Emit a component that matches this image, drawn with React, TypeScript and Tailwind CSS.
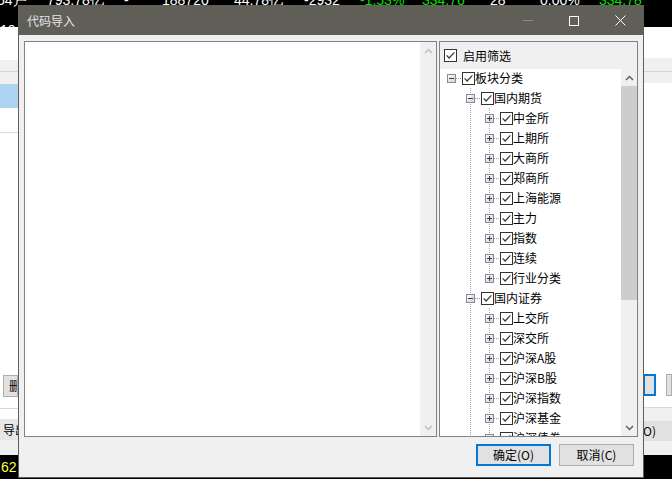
import React from 'react';

type TNode = { label: string; children?: TNode[]; expanded?: boolean };

const leaf = (label: string): TNode => ({ label, children: [{ label: '' }], expanded: false });

const TREE: TNode[] = [
  {
    label: '板块分类',
    expanded: true,
    children: [
      {
        label: '国内期货',
        expanded: true,
        children: ['中金所', '上期所', '大商所', '郑商所', '上海能源', '主力', '指数', '连续', '行业分类'].map(leaf),
      },
      {
        label: '国内证券',
        expanded: true,
        children: ['上交所', '深交所', '沪深A股', '沪深B股', '沪深指数', '沪深基金', '沪深债券', '沪深权证', '板块指数'].map(leaf),
      },
      { label: '港股', expanded: false, children: [{ label: '' }] },
    ],
  },
];

type Row = {
  label: string;
  level: number;
  guides: boolean[];
  hasTop: boolean;
  hasBottom: boolean;
  hasChildren: boolean;
  expanded: boolean;
};

function flatten(nodes: TNode[], level: number, guides: boolean[], out: Row[]): Row[] {
  nodes.forEach((n, i) => {
    const hasNext = i < nodes.length - 1;
    const hasPrev = i > 0;
    out.push({
      label: n.label,
      level,
      guides,
      hasTop: level > 0 || hasPrev,
      hasBottom: hasNext,
      hasChildren: !!(n.children && n.children.length),
      expanded: !!n.expanded,
    });
    if (n.expanded && n.children) flatten(n.children, level + 1, [...guides, hasNext], out);
  });
  return out;
}

const ROWS = flatten(TREE, 0, [], []);

const LINE = '#a0a0a0';

function GuideCell({ full }: { full: boolean }) {
  return (
    <svg width="19" height="20" className="block shrink-0">
      {full && <line x1="9.5" y1="0" x2="9.5" y2="20" stroke={LINE} strokeDasharray="1 1" />}
    </svg>
  );
}

function NodeCell({ row }: { row: Row }) {
  return (
    <svg width="19" height="20" className="block shrink-0">
      <defs>
        <linearGradient id="exg" x1="0" y1="0" x2="1" y2="1">
          <stop offset="0" stopColor="#ffffff" />
          <stop offset="1" stopColor="#cfcfcf" />
        </linearGradient>
      </defs>
      {row.hasTop && <line x1="9.5" y1="0" x2="9.5" y2="11" stroke={LINE} strokeDasharray="1 1" />}
      {row.hasBottom && <line x1="9.5" y1="10" x2="9.5" y2="20" stroke={LINE} strokeDasharray="1 1" />}
      <line x1="10" y1="10.5" x2="19" y2="10.5" stroke={LINE} strokeDasharray="1 1" />
      {row.hasChildren && (
        <g>
          <rect x="5.5" y="6.5" width="8" height="8" fill="url(#exg)" stroke="#878b94" />
          <line x1="7" y1="10.5" x2="12" y2="10.5" stroke="#2c3d66" />
          {!row.expanded && <line x1="9.5" y1="8" x2="9.5" y2="13" stroke="#2c3d66" />}
        </g>
      )}
    </svg>
  );
}

function Check({ className }: { className?: string }) {
  return (
    <svg width="13" height="13" viewBox="0 0 13 13" className={'block shrink-0 ' + (className || '')}>
      <rect x="0.5" y="0.5" width="12" height="12" fill="#ffffff" stroke="#333333" />
      <path d="M2.6 6.4 L5.1 9 L10.4 3.4" fill="none" stroke="#3a3a3a" strokeWidth="1.25" />
    </svg>
  );
}

function Chevron({ up, color }: { up: boolean; color: string }) {
  return (
    <svg width="9" height="6" viewBox="0 0 9 6" className="block">
      <path d={up ? 'M1 5 L4.5 1.5 L8 5' : 'M1 1 L4.5 4.5 L8 1'} fill="none" stroke={color} strokeWidth="1.5" />
    </svg>
  );
}

function TreeRow({ row }: { row: Row }) {
  return (
    <div className="flex h-[20px] shrink-0 pl-[2px]">
      {row.guides.map((g, i) => (
        <GuideCell key={i} full={g} />
      ))}
      <NodeCell row={row} />
      <Check className="mt-[4px] ml-[1px]" />
      <span className="whitespace-nowrap text-[12px] leading-[20px] text-black">{row.label}</span>
    </div>
  );
}

export default function App() {
  return (
    <div className="relative h-[479px] w-[672px] overflow-hidden bg-white font-['Noto_Sans_CJK_SC',sans-serif]">
      {/* background application */}
      <div className="flex h-full flex-col">
        <div className="h-[27px] shrink-0 overflow-hidden bg-black font-['Liberation_Sans',sans-serif] text-[14px] leading-[16px]">
          <div className="mt-[-8px] flex h-[16px] whitespace-nowrap text-white">
            <span className="ml-[-3px] w-[50px]">54户</span>
            <span className="w-[77px]">793.78亿</span>
            <span className="w-[38px]">-</span>
            <span className="w-[72px]">188720</span>
            <span className="w-[70px]">44.78亿</span>
            <span className="w-[56px]">-2932</span>
            <span className="w-[62px] text-[#00e000]">-1.53%</span>
            <span className="w-[68px] text-[#00e000]">334.76</span>
            <span className="w-[50px]">28</span>
            <span className="w-[59px]">0.00%</span>
            <span className="text-[#00e000]">334.78</span>
          </div>
          <div className="mt-[14px] h-[16px] text-white">10</div>
        </div>
        <div className="flex flex-1">
          <div className="flex w-[18px] shrink-0 flex-col overflow-hidden">
            <div className="h-[33px] bg-white" />
            <div className="h-[12px] border-b border-[#d6d6d6] bg-[#f0f0f0]" />
            <div className="h-[12px] bg-[#f0f0f0]" />
            <div className="h-[24px] bg-[#add5f1]" />
            <div className="h-[25px] border-b border-[#dcdcdc] bg-white" />
            <div className="flex-1 bg-white" />
            <div className="ml-[3px] flex h-[22px] items-center overflow-hidden whitespace-nowrap border border-[#adadad] bg-[#e1e1e1] pl-[5px] text-[12px] text-black">删</div>
            <div className="h-[12px] border-b border-[#d8d8d8] bg-white" />
            <div className="h-[10px] bg-white" />
            <div className="flex h-[21px] items-center overflow-hidden whitespace-nowrap bg-[#e6e6e6] pl-[3px] text-[12px] text-black">导出</div>
            <div className="h-[15px] bg-[#f0f0f0]" />
          </div>
          <div className="flex-1 bg-white" />
          <div className="flex w-[29px] shrink-0 flex-col overflow-hidden">
            <div className="h-[31px] bg-white" />
            <div className="h-[14px] border-b border-[#d6d6d6] bg-[#f0f0f0]" />
            <div className="h-[11px] bg-[#f0f0f0]" />
            <div className="flex-1 bg-white" />
            <div className="flex h-[22px]">
              <div className="w-[13px] border-2 border-[#0078d7] bg-[#e1e1e1]" />
              <div className="ml-[10px] flex-1 border border-[#adadad] bg-[#e1e1e1]" />
            </div>
            <div className="h-[12px] border-b border-[#d8d8d8] bg-white" />
            <div className="h-[13px] bg-[#f0f0f0]" />
            <div className="flex h-[20px] items-center overflow-hidden bg-[#e1e1e1] text-[12px] text-black">
              <span className="ml-[-4px] whitespace-nowrap">(O)</span>
            </div>
            <div className="h-[14px] bg-[#f0f0f0]" />
          </div>
        </div>
        <div className="h-[24px] shrink-0 overflow-hidden bg-black font-['Liberation_Sans',sans-serif] text-[14px] leading-[24px] text-[#ffff3c]">
          <span className="ml-[-3px]">.62</span>
        </div>
      </div>

      {/* dialog window */}
      <div className="absolute left-[18px] top-[5px] flex h-[473px] w-[626px] flex-col border border-[#5f5e57] bg-[#f0f0f0]">
        <div className="flex h-[29px] shrink-0 items-center bg-[#5f5e57]">
          <span className="flex-1 pl-[8px] text-[12px] text-[#e6e6e6]">代码导入</span>
          <div className="flex h-full w-[46px] items-center justify-center">
            <div className="h-px w-[10px] bg-[#8d8c87]" />
          </div>
          <div className="flex h-full w-[46px] items-center justify-center">
            <div className="h-[10px] w-[10px] border border-white" />
          </div>
          <div className="flex h-full w-[46px] items-center justify-center">
            <svg width="11" height="11" viewBox="0 0 11 11" className="block">
              <path d="M0.5 0.5 L10.5 10.5 M10.5 0.5 L0.5 10.5" stroke="#ffffff" strokeWidth="1" />
            </svg>
          </div>
        </div>
        <div className="flex flex-1 flex-col px-[5px] pt-[6px]">
          <div className="flex h-[396px] gap-[2px]">
            {/* left edit box */}
            <div className="flex w-[413px] border border-[#828282] bg-white">
              <div className="flex-1" />
              <div className="flex w-[16px] flex-col bg-[#f0f0f0]">
                <div className="flex h-[17px] items-center justify-center">
                  <Chevron up color="#c0c0c0" />
                </div>
                <div className="flex-1" />
                <div className="flex h-[17px] items-center justify-center">
                  <Chevron up={false} color="#c0c0c0" />
                </div>
              </div>
            </div>
            {/* right filter panel */}
            <div className="flex w-[199px] flex-col border border-[#828282] bg-[#f0f0f0]">
              <div className="flex h-[27px] shrink-0 items-center gap-[6px] pl-[4px]">
                <Check />
                <span className="text-[12px] text-black">启用筛选</span>
              </div>
              <div className="flex min-h-0 flex-1 bg-white">
                <div className="flex min-w-0 flex-1 flex-col overflow-hidden">
                  <div className="mt-[-1px] flex flex-col">
                    {ROWS.map((r, i) => (
                      <TreeRow key={i} row={r} />
                    ))}
                  </div>
                </div>
                <div className="flex w-[16px] shrink-0 flex-col bg-[#f0f0f0]">
                  <div className="flex h-[17px] items-center justify-center">
                    <Chevron up color="#606060" />
                  </div>
                  <div className="h-[214px] bg-[#cdcdcd]" />
                  <div className="flex-1" />
                  <div className="flex h-[17px] items-center justify-center">
                    <Chevron up={false} color="#606060" />
                  </div>
                </div>
              </div>
            </div>
          </div>
          <div className="mt-[7px] flex h-[22px] justify-end gap-[8px] pr-[4px]">
            <div className="flex w-[75px] items-center justify-center border-2 border-[#0078d7] bg-[#e1e1e1] text-[12px] text-black">
              确定(O)
            </div>
            <div className="flex w-[75px] items-center justify-center border border-[#adadad] bg-[#e1e1e1] text-[12px] text-black">
              取消(C)
            </div>
          </div>
        </div>
      </div>
    </div>
  );
}
